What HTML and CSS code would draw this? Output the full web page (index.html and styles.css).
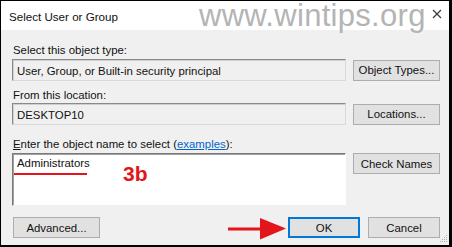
FILE: index.html
```html
<!DOCTYPE html>
<html>
<head>
<meta charset="utf-8">
<link rel="stylesheet" href="styles.css">
</head>
<body>
<div class="window">
  <div class="titlebar">
    <span class="title">Select User or Group</span>
    <span class="watermark">www.wintips.org</span>
    <svg class="close" width="10" height="10" viewBox="0 0 10 10"><path d="M1 1L9 9M9 1L1 9" stroke="#3a3a3a" stroke-width="1.2" fill="none"/></svg>
  </div>
  <div class="content">
    <div class="label first">Select this object type:</div>
    <div class="row">
      <div class="field ro">User, Group, or Built-in security principal</div>
      <div class="btn">Object Types...</div>
    </div>
    <div class="label second">From this location:</div>
    <div class="row">
      <div class="field ro">DESKTOP10</div>
      <div class="btn">Locations...</div>
    </div>
    <div class="label third"><u>E</u>nter the object name to select (<a class="link">examples</a>):</div>
    <div class="row top">
      <div class="area">
        <span class="entry">Administrators</span>
        <span class="redline"></span>
        <span class="tag">3b</span>
      </div>
      <div class="btn">Check Names</div>
    </div>
    <div class="footer">
      <div class="btn">Advanced...</div>
      <div class="spacer"></div>
      <div class="btn small ok">OK</div>
      <div class="btn small">Cancel</div>
      <svg class="arrow" width="60" height="24" viewBox="0 0 60 24"><path d="M1 10.5H33V1L59 11.5L33 22.5V13.5H1Z" fill="#e3151b"/></svg>
      <svg class="grip" width="8" height="8" viewBox="0 0 8 8"><g fill="#b5b5b5"><rect x="6" y="0" width="1" height="1"/><rect x="4" y="2" width="1" height="1"/><rect x="6" y="2" width="1" height="1"/><rect x="2" y="4" width="1" height="1"/><rect x="4" y="4" width="1" height="1"/><rect x="6" y="4" width="1" height="1"/><rect x="0" y="6" width="1" height="1"/><rect x="2" y="6" width="1" height="1"/><rect x="4" y="6" width="1" height="1"/><rect x="6" y="6" width="1" height="1"/></g></svg>
    </div>
  </div>
</div>
</body>
</html>
```
FILE: styles.css
```css
html, body {
  margin: 0;
  padding: 0;
  background: #000;
}
.window {
  width: 452px;
  height: 247px;
  box-sizing: border-box;
  border-style: solid;
  border-color: #000;
  border-width: 1px 3px 2px 1px;
  background: #f0f0f0;
  font-family: "Liberation Sans", Arial, sans-serif;
  font-size: 11.4px;
  color: #111;
  display: flex;
  flex-direction: column;
  position: relative;
  overflow: hidden;
}
.titlebar {
  height: 29px;
  flex: none;
  background: #fff;
  display: flex;
  align-items: center;
  padding-left: 8px;
  position: relative;
}
.title {
  font-size: 11.6px;
  color: #111;
  position: relative;
  top: 1px;
}
.watermark {
  position: absolute;
  left: 198px;
  top: 0;
  font-family: "Liberation Sans", Arial, sans-serif;
  font-size: 31px;
  color: #b4b4b4;
  letter-spacing: 0.3px;
  z-index: 2;
  line-height: 30px;
}
.close {
  position: absolute;
  left: 431px;
  top: 8px;
  z-index: 3;
}
.content {
  flex: 1;
  display: flex;
  flex-direction: column;
  padding: 0 9px 0 11px;
  position: relative;
}
.label {
  height: 14px;
  line-height: 14px;
  padding-left: 1px;
}
.label.first { margin-top: 13px; margin-bottom: 2px; }
.label.second { margin-top: 7px; margin-bottom: 1px; }
.label.third { margin-top: 12px; margin-bottom: 2px; }
.link {
  color: #0066cc;
  text-decoration: underline;
}
.row {
  display: flex;
  align-items: center;
  gap: 7px;
}
.row.top { align-items: flex-start; }
.field {
  width: 334px;
  height: 22px;
  box-sizing: border-box;
  border: 1px solid;
  border-color: #8a8a8a #d9d9d9 #d9d9d9 #8a8a8a;
  box-shadow: inset 1px 1px 0 #cfcfcf;
  display: flex;
  align-items: center;
  padding-left: 4px;
  padding-top: 1px;
  background: #f0f0f0;
}
.area {
  width: 334px;
  height: 53px;
  box-sizing: border-box;
  border: 1px solid;
  border-color: #7a7a7a #ffffff #f0f0f0 #7a7a7a;
  box-shadow: inset 1px 1px 0 #a0a0a0;
  background: #fff;
  position: relative;
  padding: 2px 0 0 4px;
}
.entry {
  line-height: 14px;
  display: block;
}
.redline {
  position: absolute;
  left: 1px;
  top: 19px;
  width: 73px;
  height: 2px;
  background: #e3151b;
}
.tag {
  position: absolute;
  left: 110px;
  top: 8px;
  font-size: 21px;
  font-weight: bold;
  color: #e3151b;
  line-height: 24px;
}
.btn {
  width: 87px;
  height: 21px;
  box-sizing: border-box;
  border: 1px solid #adadad;
  background: #e1e1e1;
  display: flex;
  align-items: center;
  justify-content: center;
  flex: none;
  color: #111;
}
.btn.small {
  width: 72px;
}
.btn.ok {
  border-color: #0078d7;
  box-shadow: inset 0 0 0 1px #0078d7;
}
.footer {
  display: flex;
  align-items: center;
  gap: 8px;
  margin-top: 11px;
  padding-left: 1px;
  position: relative;
}
.spacer { flex: 1; }
.arrow {
  position: absolute;
  left: 215px;
  top: 0;
}
.grip {
  position: absolute;
  right: -8px;
  top: 18px;
}
```
